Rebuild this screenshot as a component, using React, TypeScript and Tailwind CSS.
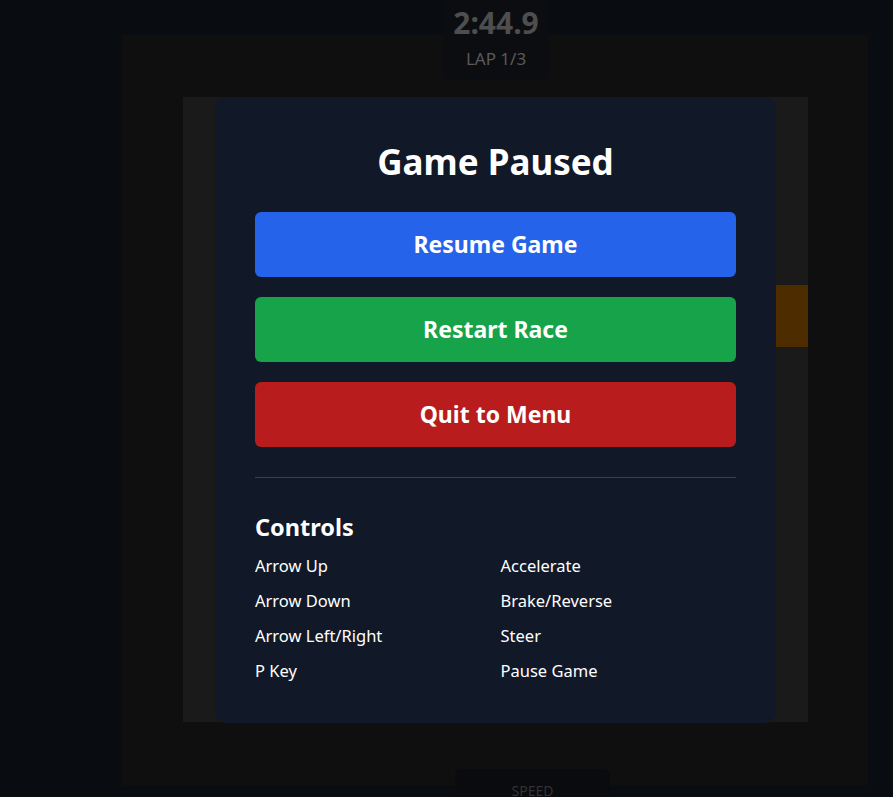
import React from "react";

const controls = [
    {key: "Arrow Up", action: "Accelerate"},
    {key: "Arrow Down", action: "Brake/Reverse"},
    {key: "Arrow Left/Right", action: "Steer"},
    {key: "P Key", action: "Pause Game"}
];

const PauseMenu: React.FC = () => {
    return (
        <div className="w-[561px] rounded-xl bg-[#111827] p-10 text-white">
            <h2 className="mb-[25px] text-center text-[35px] font-bold leading-[50px]">Game Paused</h2>
            <div className="flex flex-col gap-5">
                <button className="h-[65px] rounded-md bg-[#2563eb] text-[23px] font-bold leading-8">Resume Game</button>
                <button className="h-[65px] rounded-md bg-[#16a34a] text-[23px] font-bold leading-8">Restart Race</button>
                <button className="h-[65px] rounded-md bg-[#b91c1c] text-[23px] font-bold leading-8">Quit to Menu</button>
            </div>
            <div className="mt-[30px] border-t border-[#374151] pt-[35px]">
                <h3 className="mb-[13px] text-[23.5px] font-bold leading-7">Controls</h3>
                <div className="grid grid-cols-2 gap-x-[10px] gap-y-[11px] text-[16.5px] leading-6">
                    {controls.map((c) => (
                        <React.Fragment key={c.key}>
                            <span>{c.key}</span>
                            <span>{c.action}</span>
                        </React.Fragment>
                    ))}
                </div>
            </div>
        </div>
    );
};

export default function App() {
    return (
        <div
            className="relative h-[797px] w-[893px] overflow-hidden bg-[#090c11] pt-[35px]"
            style={{fontFamily: '"Noto Sans", "Open Sans", sans-serif'}}
        >
            {/* game area */}
            <div className="ml-[122px] h-[750px] w-[746px] bg-[#0f0f0f] pl-[61px] pt-[62px]">
                <div className="relative h-[625px] w-[625px] bg-[#1a1a1a]">
                    <div className="absolute right-0 top-[188px] h-[62px] w-[32px] bg-[#4d2d00]" />
                    {/* pause overlay */}
                    <div className="absolute inset-0 flex items-center justify-center">
                        <PauseMenu />
                    </div>
                </div>
            </div>

            {/* HUD: timer */}
            <div className="absolute left-[443px] top-0 flex h-[80px] w-[106px] flex-col items-center rounded-b-md bg-[#0c0d11]">
                <span className="mt-[3px] text-[30px] font-bold leading-[40px] text-[#4e4e4e]">2:44.9</span>
                <span className="mt-[4px] text-[17px] leading-6 text-[#5a5a5a]">LAP 1/3</span>
            </div>

            {/* HUD: speed */}
            <div className="absolute left-[455px] top-[769px] flex h-[60px] w-[155px] justify-center rounded-t-md bg-[#0a0b0f]">
                <span className="mt-[12px] text-sm text-[#333]">SPEED</span>
            </div>
        </div>
    );
}
